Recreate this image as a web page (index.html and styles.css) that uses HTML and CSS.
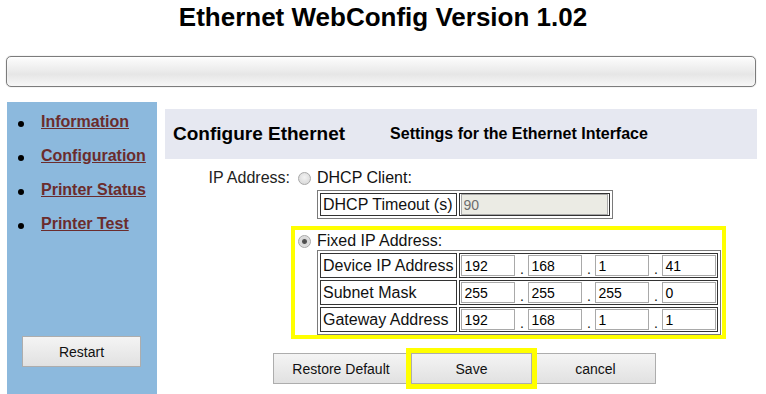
FILE: index.html
```html
<!DOCTYPE html>
<html>
<head>
<meta charset="utf-8">
<title>Ethernet WebConfig</title>
<link rel="stylesheet" href="styles.css">
</head>
<body>
<h1 class="title">Ethernet WebConfig Version 1.02</h1>
<div class="bar"></div>
<div class="main">
  <nav class="side">
    <ul class="menu">
      <li><a href="#">Information</a></li>
      <li><a href="#">Configuration</a></li>
      <li><a href="#">Printer Status</a></li>
      <li><a href="#">Printer Test</a></li>
    </ul>
    <button class="btn restart">Restart</button>
  </nav>
  <section class="content">
    <div class="head">
      <span class="h-title">Configure Ethernet</span>
      <span class="h-sub">Settings for the Ethernet Interface</span>
    </div>
    <div class="form">
      <div class="lbl">IP Address:</div>
      <div class="opts">
        <label class="opt"><input class="radio" type="radio" name="ip"><span>DHCP Client:</span></label>
        <table class="tbl dhcp">
          <tr>
            <td class="cap">DHCP Timeout (s)</td>
            <td><input class="field wide" type="text" value="90" disabled></td>
          </tr>
        </table>
        <div class="fixed">
          <label class="opt"><input class="radio" type="radio" name="ip" checked><span>Fixed IP Address:</span></label>
          <table class="tbl ips">
            <tr>
              <td class="cap">Device IP Address</td>
              <td><div class="quad"><input class="field" value="192"><span class="dot">.</span><input class="field" value="168"><span class="dot">.</span><input class="field" value="1"><span class="dot">.</span><input class="field" value="41"></div></td>
            </tr>
            <tr>
              <td class="cap">Subnet Mask</td>
              <td><div class="quad"><input class="field" value="255"><span class="dot">.</span><input class="field" value="255"><span class="dot">.</span><input class="field" value="255"><span class="dot">.</span><input class="field" value="0"></div></td>
            </tr>
            <tr>
              <td class="cap">Gateway Address</td>
              <td><div class="quad"><input class="field" value="192"><span class="dot">.</span><input class="field" value="168"><span class="dot">.</span><input class="field" value="1"><span class="dot">.</span><input class="field" value="1"></div></td>
            </tr>
          </table>
        </div>
      </div>
    </div>
    <div class="actions">
      <button class="btn act restore">Restore Default</button>
      <button class="btn act save">Save</button>
      <button class="btn act cancel">cancel</button>
    </div>
  </section>
</div>
</body>
</html>
```
FILE: styles.css
```css
html, body {
  margin: 0;
  padding: 0;
  background: #ffffff;
  font-family: "Liberation Sans", Arial, sans-serif;
  color: #111;
  overflow: hidden;
}

.title {
  margin: 2px 0 0;
  font-size: 26px;
  line-height: 30px;
  font-weight: bold;
  text-align: center;
  color: #000;
}

.bar {
  margin: 24px 10px 0 6px;
  height: 29px;
  border: 1px solid #7c7c7c;
  border-radius: 5px;
  background: linear-gradient(#fdfdfd 0%, #ececec 45%, #e6e6e6 60%, #f7f7f7 100%);
  box-shadow: inset 0 1px 2px #ffffff, 0 0 1px #999;
}

.main {
  display: flex;
  margin-top: 15px;
  padding-left: 7px;
}

.side {
  width: 150px;
  height: 300px;
  background: #8cb9dd;
  display: flex;
  flex-direction: column;
  flex-shrink: 0;
}

.menu {
  list-style: none;
  margin: 0;
  padding: 3px 0 0;
}

.menu li {
  display: flex;
  align-items: center;
  height: 34px;
}

.menu li::before {
  content: "";
  width: 6px;
  height: 6px;
  border-radius: 50%;
  background: #000;
  margin: 3px 17px 0 11px;
  flex-shrink: 0;
}

.menu a {
  color: #6b2c2c;
  font-size: 16px;
  font-weight: bold;
  text-decoration: underline;
}

.btn {
  font-family: "Liberation Sans", Arial, sans-serif;
  font-size: 14px;
  color: #111;
  height: 31px;
  border: 1px solid #adadad;
  border-radius: 0;
  background: linear-gradient(#f4f4f4, #e1e1e1);
  padding: 0;
}

.restart {
  margin: 95px 0 0 15px;
  width: 119px;
}

.content {
  margin-left: 8px;
  width: 592px;
  margin-top: 7px;
}

.head {
  height: 50px;
  background: #e6e8f1;
  display: flex;
  align-items: center;
  padding-left: 8px;
  color: #000;
}

.h-title {
  font-size: 19px;
  font-weight: bold;
}

.h-sub {
  margin-left: 45px;
  font-size: 16px;
  font-weight: bold;
}

.form {
  display: grid;
  grid-template-columns: 133px 1fr;
  margin-top: 10px;
  font-size: 16px;
}

.lbl {
  text-align: right;
  padding-right: 8px;
  line-height: 18px;
  color: #222;
}

.opt {
  display: flex;
  align-items: center;
  height: 18px;
  line-height: 18px;
  gap: 6px;
}

.radio {
  appearance: none;
  -webkit-appearance: none;
  width: 13px;
  height: 13px;
  margin: 0;
  border-radius: 50%;
  border: 1px solid #a8a8a8;
  background: radial-gradient(circle at 50% 40%, #f2f2f2, #d4d4d4);
  box-sizing: border-box;
  flex-shrink: 0;
}

.radio:checked {
  background: radial-gradient(circle, #4a4a4a 0, #555 2px, #d8d8d8 3px, #e6e6e6 100%);
}

.tbl {
  border: 1px solid #7a7a7a;
  border-spacing: 2px;
  margin-left: 19px;
  font-size: 16px;
}

.tbl td {
  border: 1px solid #333;
  padding: 1px;
  height: 21px;
  line-height: 20px;
  white-space: nowrap;
}

.tbl td.cap {
  padding: 0 3px 0 2px;
}

.dhcp {
  margin-top: 3px;
}

.dhcp td {
  padding: 0 1px;
}

.field {
  box-sizing: border-box;
  width: 54px;
  height: 21px;
  border: 1px solid #a9a9a9;
  font-family: "Liberation Sans", Arial, sans-serif;
  font-size: 14px;
  padding: 0 2px;
  margin: 0;
  color: #000;
  background: #fff;
  vertical-align: middle;
}

.field.wide {
  width: 147px;
  background: #ebebe4;
  color: #6d6d6d;
}

.quad {
  display: flex;
  align-items: center;
}

.dot {
  width: 13px;
  text-align: center;
  font-size: 14px;
  padding-top: 6px;
  line-height: 14px;
}

.fixed {
  margin: 11px 0 0 -3px;
  width: 427px;
  padding: 2px 0 0 3px;
  box-sizing: border-box;
  outline: 4px solid #ffff00;
}

.ips {
  margin-top: 0;
}

.actions {
  display: flex;
  gap: 2px;
  padding-left: 108px;
  margin-top: 18px;
}

.act {
  width: 121px;
}

.restore {
  width: 136px;
}

.save {
  outline: 5px solid #ffff00;
  outline-offset: 0;
  position: relative;
  z-index: 1;
}

.cancel {
  margin-left: 1px;
}
```
